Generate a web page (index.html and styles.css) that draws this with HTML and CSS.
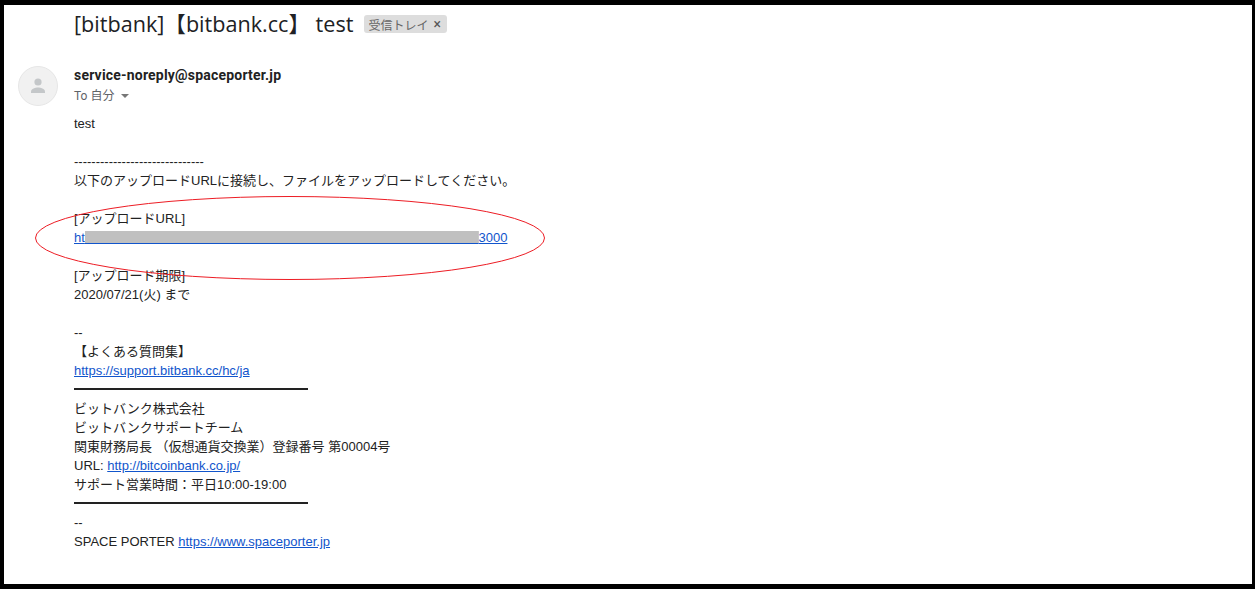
FILE: index.html
```html
<!DOCTYPE html>
<html lang="ja">
<head>
<meta charset="utf-8">
<title>[bitbank]【bitbank.cc】 test</title>
<link rel="stylesheet" href="styles.css">
</head>
<body>
<main class="frame">
  <header class="subject">
    <h1 class="subject-text">[bitbank]【bitbank.cc】 test</h1>
    <span class="chip">受信トレイ<span class="chip-x">×</span></span>
  </header>
  <section class="message">
    <div class="avatar">
      <svg viewBox="0 0 40 40" width="40" height="40"><circle cx="20" cy="20" r="19.5" fill="#f1f1f1" stroke="#e6e6e6"/><circle cx="20" cy="16" r="3.6" fill="#c4c7c9"/><path d="M13 25.5c0-2.6 4.6-3.9 7-3.9s7 1.3 7 3.9V27H13z" fill="#c4c7c9"/></svg>
    </div>
    <div class="content">
      <div class="sender">service-noreply@spaceporter.jp</div>
      <div class="recipient">To 自分<span class="caret"></span></div>
      <div class="body">
        <p>test</p>
        <p>&nbsp;</p>
        <p>------------------------------</p>
        <p>以下のアップロードURLに接続し、ファイルをアップロードしてください。</p>
        <p>&nbsp;</p>
        <p>[アップロードURL]</p>
        <p><a href="#">ht<span class="masked">&nbsp;&nbsp;&nbsp;&nbsp;&nbsp;&nbsp;&nbsp;&nbsp;&nbsp;&nbsp;&nbsp;&nbsp;&nbsp;&nbsp;&nbsp;&nbsp;&nbsp;&nbsp;&nbsp;&nbsp;&nbsp;&nbsp;&nbsp;&nbsp;&nbsp;&nbsp;&nbsp;&nbsp;&nbsp;&nbsp;&nbsp;&nbsp;&nbsp;&nbsp;&nbsp;&nbsp;&nbsp;&nbsp;&nbsp;&nbsp;&nbsp;&nbsp;&nbsp;&nbsp;&nbsp;&nbsp;&nbsp;&nbsp;&nbsp;&nbsp;&nbsp;&nbsp;&nbsp;&nbsp;&nbsp;&nbsp;&nbsp;&nbsp;&nbsp;&nbsp;&nbsp;&nbsp;&nbsp;&nbsp;&nbsp;&nbsp;&nbsp;&nbsp;&nbsp;&nbsp;&nbsp;&nbsp;&nbsp;&nbsp;&nbsp;&nbsp;&nbsp;&nbsp;&nbsp;&nbsp;&nbsp;&nbsp;&nbsp;&nbsp;&nbsp;&nbsp;&nbsp;&nbsp;&nbsp;&nbsp;&nbsp;&nbsp;&nbsp;&nbsp;&nbsp;&nbsp;&nbsp;&nbsp;&nbsp;&nbsp;&nbsp;&nbsp;&nbsp;&nbsp;&nbsp;&nbsp;&nbsp;&nbsp;&nbsp;</span>3000</a></p>
        <p>&nbsp;</p>
        <p>[アップロード期限]</p>
        <p>2020/07/21(火) まで</p>
        <p>&nbsp;</p>
        <p>--</p>
        <p>【よくある質問集】</p>
        <p><a href="#">https://support.bitbank.cc/hc/ja</a></p>
        <div class="rule-row"><div class="rule"></div></div>
        <p>ビットバンク株式会社</p>
        <p>ビットバンクサポートチーム</p>
        <p>関東財務局長 （仮想通貨交換業）登録番号 第00004号</p>
        <p>URL: <a href="#">http://bitcoinbank.co.jp/</a></p>
        <p>サポート営業時間：平日10:00-19:00</p>
        <div class="rule-row"><div class="rule"></div></div>
        <p>--</p>
        <p>SPACE PORTER <a href="#">https://www.spaceporter.jp</a></p>
      </div>
    </div>
  </section>
  <svg class="annotation" viewBox="0 0 512 86" width="512" height="86"><ellipse cx="256" cy="43" rx="254.5" ry="41.5" fill="none" stroke="#ed1c24" stroke-width="1"/></svg>
</main>
</body>
</html>
```
FILE: styles.css
```css
html, body {
  margin: 0;
  padding: 0;
  background: #000;
}
.frame {
  position: relative;
  box-sizing: border-box;
  width: 1248px;
  height: 579px;
  margin: 5px 3px 5px 4px;
  background: #fff;
  overflow: hidden;
  color: #222;
  font-family: "Liberation Sans", "Noto Sans CJK JP", sans-serif;
  font-size: 13px;
}
.subject {
  box-sizing: border-box;
  display: flex;
  align-items: center;
  gap: 11px;
  height: 39px;
  padding: 0 0 1px 70px;
}
.subject-text {
  margin: 0;
  font-family: "Open Sans", "Noto Sans CJK JP", sans-serif;
  font-size: 21.6px;
  font-weight: 400;
  line-height: 28px;
  color: #202124;
  white-space: pre;
}
.chip {
  display: inline-flex;
  align-items: center;
  height: 18px;
  padding: 0 6px 0 4px;
  border-radius: 3px;
  background: #dddddd;
  color: #666;
  font-family: "Roboto", "Noto Sans CJK JP", sans-serif;
  font-size: 12px;
}
.chip-x {
  margin-left: 5px;
  color: #555;
  font-size: 14px;
  font-weight: 400;
}
.message {
  display: flex;
  padding: 22px 0 0 14px;
}
.avatar {
  flex: none;
  width: 40px;
  height: 40px;
  margin-right: 16px;
}
.avatar svg {
  display: block;
}
.content {
  min-width: 0;
}
.sender {
  font-family: "Roboto", "Noto Sans CJK JP", sans-serif;
  font-size: 14px;
  font-weight: 700;
  letter-spacing: 0.2px;
  line-height: 18px;
  color: #222;
}
.recipient {
  display: flex;
  align-items: center;
  margin-top: 2px;
  font-family: "Roboto", "Noto Sans CJK JP", sans-serif;
  font-size: 12px;
  line-height: 20px;
  color: #5f6368;
}
.caret {
  width: 0;
  height: 0;
  margin-left: 7px;
  border-left: 4px solid transparent;
  border-right: 4px solid transparent;
  border-top: 4px solid #777;
}
.body {
  margin-top: 8px;
}
.body p {
  margin: 0;
  height: 19px;
  line-height: 19px;
  white-space: nowrap;
}
a {
  color: #1155cc;
  text-decoration: underline;
}
.masked {
  background: linear-gradient(#c0c0c0, #c0c0c0) no-repeat center top 1px / 100% 12px;
}
.rule-row {
  box-sizing: border-box;
  display: flex;
  align-items: center;
  height: 19px;
  padding-bottom: 2px;
}
.rule {
  width: 234px;
  height: 2px;
  background: #222;
}
.annotation {
  position: absolute;
  left: 30px;
  top: 190px;
}
```
